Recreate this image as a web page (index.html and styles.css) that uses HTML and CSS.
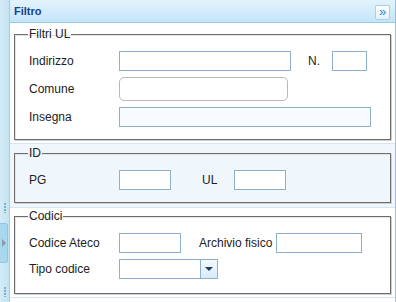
FILE: index.html
```html
<!DOCTYPE html>
<html lang="it">
<head>
    <meta charset="UTF-8">
    <title>Filtro</title>
    <link rel="stylesheet" href="styles.css">
</head>
<body>
    <div class="layout">
        <!-- Splitter on the left -->
        <div class="splitter">
            <span class="grip"></span>
            <span class="splitter-btn"><span class="arrow-right"></span></span>
            <span class="grip"></span>
        </div>

        <div class="panel">
            <div class="panel-header">
                <span class="panel-title">Filtro</span>
                <span class="collapse-btn">&raquo;</span>
            </div>

            <div class="section">
                <fieldset class="group">
                    <legend>Filtri UL</legend>
                    <div class="row">
                        <label class="lbl">Indirizzo</label>
                        <input type="text" class="field w-indirizzo">
                        <label class="lbl lbl-n">N.</label>
                        <input type="text" class="field w-num">
                    </div>
                    <div class="row row-tall">
                        <label class="lbl">Comune</label>
                        <input type="text" class="field field-round w-comune">
                    </div>
                    <div class="row">
                        <label class="lbl">Insegna</label>
                        <input type="text" class="field field-tint w-insegna">
                    </div>
                </fieldset>
            </div>

            <div class="section section-id">
                <fieldset class="group">
                    <legend>ID</legend>
                    <div class="row">
                        <label class="lbl">PG</label>
                        <input type="text" class="field w-small">
                        <label class="lbl lbl-ul">UL</label>
                        <input type="text" class="field w-small">
                    </div>
                </fieldset>
            </div>

            <div class="section section-codici">
                <fieldset class="group">
                    <legend>Codici</legend>
                    <div class="row">
                        <label class="lbl">Codice Ateco</label>
                        <input type="text" class="field w-ateco">
                        <label class="lbl lbl-archivio">Archivio fisico</label>
                        <input type="text" class="field w-archivio">
                    </div>
                    <div class="row">
                        <label class="lbl">Tipo codice</label>
                        <div class="combo">
                            <input type="text" class="combo-input">
                            <span class="combo-trigger"><span class="arrow-down"></span></span>
                        </div>
                    </div>
                </fieldset>
            </div>
        </div>
    </div>
</body>
</html>
```

FILE: styles.css
```css
:root {
    --text-color: #222222;
    --title-color: #15428b;
    --field-border: #8eafcd;
    --sep-color: #d9e5ee;
}
body {
    margin: 0;
    font-family: 'Liberation Sans', Arial, sans-serif;
    font-size: 12px;
    color: var(--text-color);
    background: #ffffff;
}
.layout { display: flex; width: 396px; height: 302px; overflow: hidden; }

/* Splitter */
.splitter {
    width: 9px;
    flex: none;
    background: linear-gradient(to right, #d3ecf7, #c3e3f1);
    display: flex; flex-direction: column; align-items: center;
    padding-top: 203px; box-sizing: border-box;
}
.grip {
    width: 2px; height: 10px;
    background: repeating-linear-gradient(to bottom, #7fb0c8 0 2px, transparent 2px 3px);
}
.splitter-btn {
    width: 8px; height: 40px; margin: 10px 0 24px 0;
    align-self: flex-start;
    background: #a9d8ee; border: 1px solid #8fc6df; border-left: none;
    border-radius: 0 3px 3px 0; box-sizing: border-box;
    display: flex; align-items: center; justify-content: center;
}
.arrow-right {
    width: 0; height: 0;
    border-top: 4px solid transparent; border-bottom: 4px solid transparent;
    border-left: 4px solid #8a9aa8;
}

/* Panel */
.panel {
    width: 385px; flex: none;
    border-left: 1px solid #a4cfe4; border-right: 1px solid #99c3dd;
}
.panel-header {
    height: 22px; border-bottom: 1px solid #99cae6;
    background: linear-gradient(to bottom, #e3f3fd, #c3e5f8);
    display: flex; align-items: center; justify-content: space-between;
    padding: 0 5px 0 4px;
}
.panel-title { font-size: 11px; font-weight: 700; color: var(--title-color); }
.collapse-btn {
    width: 15px; height: 15px; box-sizing: border-box;
    border: 1px solid #a9d0ea; border-radius: 2px;
    background: linear-gradient(to bottom, #ffffff, #e3f1fb);
    color: #1f8ad6; font-size: 13px; line-height: 11px; text-align: center;
    margin-top: 3px;
}

/* Sections */
.section { padding: 4px 0 3px 0; border-bottom: 1px solid var(--sep-color); }
.section-id { background: #eff7fd; padding: 2px 0 4px 0; }
.section-codici { padding: 1px 0 3px 0; }

.group {
    margin: 0 4px; padding: 10px 14px 12px 14px;
    border: 1px solid #6d6d6d;
    box-shadow: 1px 1px 0 #cfcfcf, inset 1px 1px 0 #e4e4e4;
    min-width: 0;
}
.section-codici .group { padding-bottom: 14px; }
.group legend { padding: 0 1px; line-height: 14px; margin-left: -1px; }

.row { display: flex; align-items: center; height: 20px; margin-bottom: 6px; }
.row:last-child { margin-bottom: 0; }
.row-tall { height: 24px; }
.lbl { width: 90px; flex: none; }
.lbl-n { width: 24px; margin-left: 17px; }
.lbl-ul { width: 32px; margin-left: 31px; }
.lbl-archivio { width: 77px; margin-left: 18px; }

.field {
    height: 20px; box-sizing: border-box; margin: 0; padding: 0 3px;
    border: 1px solid var(--field-border); background: #ffffff;
    font: inherit; flex: none;
}
.field-round { height: 24px; border: 1px solid #b8b8b8; border-radius: 5px; }
.field-tint { background: #f7fbfe; }
.w-indirizzo { width: 172px; }
.w-num { width: 35px; }
.w-comune { width: 169px; }
.w-insegna { width: 252px; }
.w-small { width: 52px; }
.w-ateco { width: 62px; }
.w-archivio { width: 86px; }

/* Combo */
.combo { display: flex; width: 99px; height: 20px; border: 1px solid var(--field-border); box-sizing: border-box; }
.combo-input { flex: 1; min-width: 0; border: none; margin: 0; padding: 0 3px; background: #ffffff; font: inherit; }
.combo-trigger {
    width: 16px; flex: none; border-left: 1px solid var(--field-border);
    background: linear-gradient(to bottom, #f4f9fd, #d8ebf8);
    display: flex; align-items: center; justify-content: center;
}
.arrow-down {
    width: 0; height: 0;
    border-left: 4px solid transparent; border-right: 4px solid transparent;
    border-top: 4px solid #1e3e62;
}
```
